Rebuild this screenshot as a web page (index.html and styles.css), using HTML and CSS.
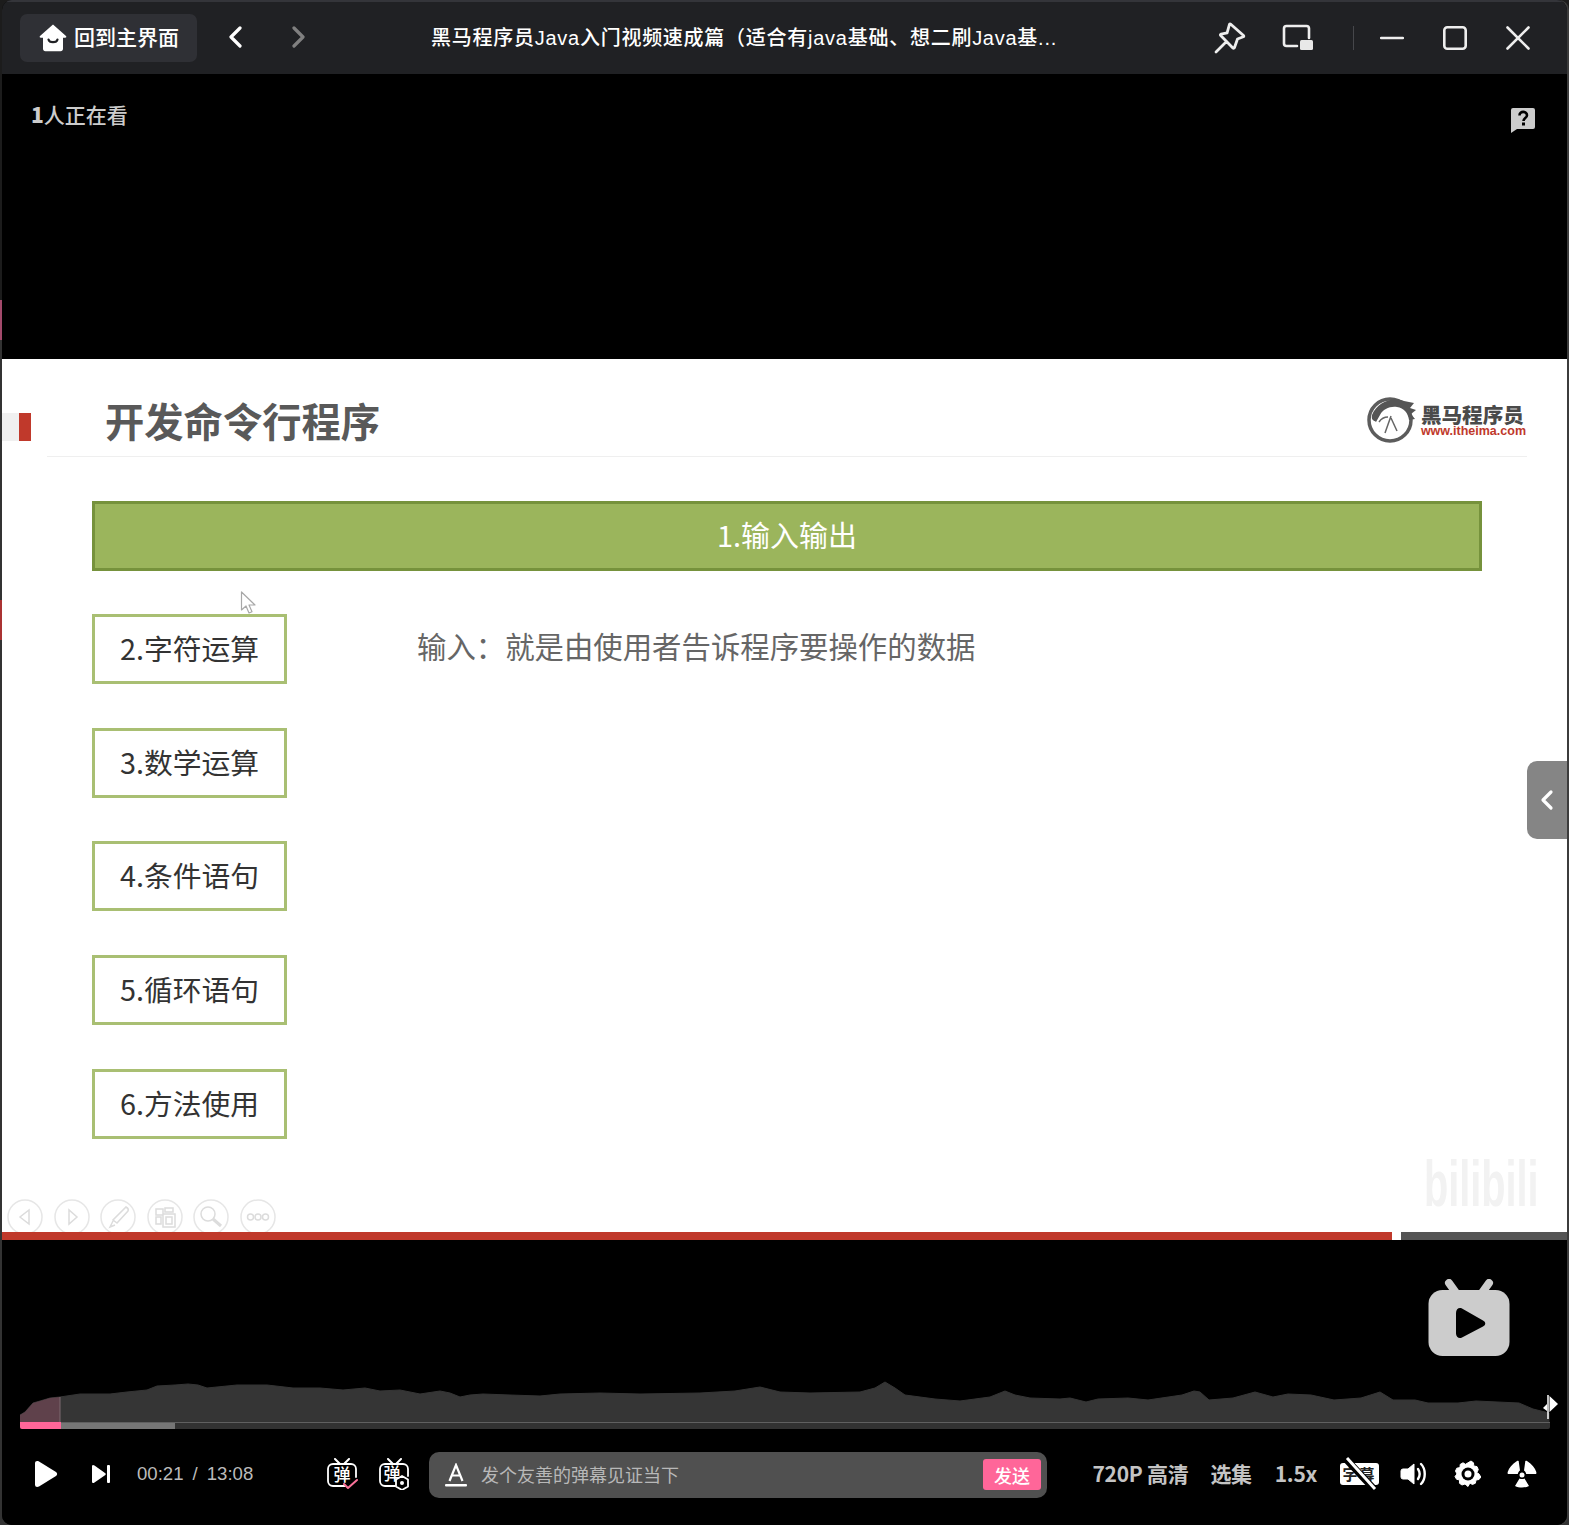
FILE: index.html
```html
<!DOCTYPE html>
<html lang="zh-CN">
<head>
<meta charset="utf-8">
<title>黑马程序员Java入门视频速成篇</title>
<link rel="stylesheet" href="styles.css">
</head>
<body>
<div class="window">
  <header class="titlebar">
    <button class="home-btn">
      <svg class="home-icon" viewBox="0 0 28 28"><path d="M14 .5 27 12c.7.7.2 1.800-.8 1.800H24v11c0 1.500-1 2.400-2.400 2.400H6.400C5 27.200 4 26.300 4 24.800v-11H1.800C.8 13.800.3 12.700 1 12z" fill="#fff"/><path d="M9.500 15.500c.8 3.600 8.200 3.600 9 0" fill="none" stroke="#202124" stroke-width="2.200" stroke-linecap="round"/></svg>
      <span class="raise">回到主界面</span>
    </button>
    <svg class="nav-arrow nav-back" viewBox="0 0 14 22"><path d="M12 2 3 11l9 9" fill="none" stroke="#fff" stroke-width="3.200" stroke-linecap="round" stroke-linejoin="round"/></svg>
    <svg class="nav-arrow nav-forward" viewBox="0 0 14 22"><path d="m2 2 9 9-9 9" fill="none" stroke="#808080" stroke-width="3.200" stroke-linecap="round" stroke-linejoin="round"/></svg>
    <div class="win-title"><span class="raise">黑马程序员Java入门视频速成篇（适合有java基础、想二刷Java基...</span></div>
    <div class="win-tools">
      <svg class="win-icon pin" viewBox="0 0 32 32"><path d="M16.500 2 29.500 13.500c.5.500.4 1-.2 1.300l-5.800 2.200-3 8.500c-.3.800-1 1-1.600.4L6.700 13.600c-.6-.6-.4-1.200.4-1.500l6-1.300 2.300-8.200c.2-.7.600-1 1.100-.6zM11 21l-9 9" fill="none" stroke="#eee" stroke-width="2.800" stroke-linecap="round" stroke-linejoin="round"/></svg>
      <svg class="win-icon pip" viewBox="0 0 32 28"><path d="M15 22H4.500A2.500 2.500 0 0 1 2 19.500V4.500A2.500 2.500 0 0 1 4.500 2h20A2.500 2.500 0 0 1 27 4.500V14" fill="none" stroke="#eee" stroke-width="2.600" stroke-linecap="round"/><rect x="18" y="16" width="13" height="10" rx="1.500" fill="#e8e8e8"/></svg>
      <i class="win-sep"></i>
      <svg class="win-icon min" viewBox="0 0 24 24"><path d="M1 12h22" stroke="#eee" stroke-width="2.500" stroke-linecap="round"/></svg>
      <svg class="win-icon max" viewBox="0 0 24 24"><rect x="1.300" y="1.300" width="21.400" height="21.400" rx="3" fill="none" stroke="#eee" stroke-width="2.600"/></svg>
      <svg class="win-icon close" viewBox="0 0 24 24"><path d="m1.500 1.500 21 21m0-21-21 21" stroke="#eee" stroke-width="2.600" stroke-linecap="round"/></svg>
    </div>
  </header>

  <main class="player">
    <div class="viewers"><b class="viewers-count">1</b>人正在看</div>
    <svg class="help-icon" viewBox="0 0 26 26"><path d="M3 1h20a2 2 0 0 1 2 2v17a2 2 0 0 1-2 2H7l-6 4V3a2 2 0 0 1 2-2z" fill="#ccc"/><path d="M9.500 8.500c0-5 7.500-4.500 7.500-.3 0 3-3.500 2.800-3.500 5.800" fill="none" stroke="#000" stroke-width="2.600"/><rect x="12" y="15.500" width="3" height="3" fill="#000"/></svg>

    <div class="letterbox"></div>

    <section class="slide">
      <div class="slide-top">
        <i class="slide-marker"></i>
        <h1 class="slide-title">开发命令行程序</h1>
        <div class="logo">
          <svg class="logo-mark" viewBox="0 0 50 50"><circle cx="24" cy="25" r="21" fill="none" stroke="#5c5c5c" stroke-width="3.500"/><path d="M6 20C11 8 26 1 38 6l10 2-4 5 6 2-5 4 4 5-6 1c-1-7-5-12-12-13-7-1-14 2-17 8l-4 7c-2-2-5-1-4-7z" fill="#555"/><path d="M25 21 19 38M25 23l6 13M13 27c2-3 5-5 9-5" fill="none" stroke="#666" stroke-width="1.500"/></svg>
          <div class="logo-text">
            <span class="logo-cn">黑马程序员</span>
            <span class="logo-en">www.itheima.com</span>
          </div>
        </div>
      </div>
      <div class="slide-rule"></div>
      <div class="banner">1.输入输出</div>
      <div class="slide-body">
        <ul class="topics">
          <li>2.字符运算</li>
          <li>3.数学运算</li>
          <li>4.条件语句</li>
          <li>5.循环语句</li>
          <li>6.方法使用</li>
        </ul>
        <p class="definition">输入：就是由使用者告诉程序要操作的数据</p>
      </div>

      <svg class="mouse" viewBox="0 0 18 24"><path d="M1.500 1v18l4.500-4 3 7 3-1.300-3-6.700h6z" fill="#fff" stroke="#a8a8a8" stroke-width="1.200" stroke-linejoin="round"/></svg>

      <div class="ppt-tools">
        <svg class="ppt-tool" viewBox="0 0 36 36"><circle cx="18" cy="18" r="17" class="ppt-ring"/><path d="M22 11v14l-9-7z" class="ppt-line"/></svg>
        <svg class="ppt-tool" viewBox="0 0 36 36"><circle cx="18" cy="18" r="17" class="ppt-ring"/><path d="M15 11v14l8-7z" class="ppt-line"/></svg>
        <svg class="ppt-tool" viewBox="0 0 36 36"><circle cx="18" cy="18" r="17" class="ppt-ring"/><path d="M26 8c2 1 3 2 2 4L17 24l-4-3zM13 22l-3 6 5-2" class="ppt-line"/></svg>
        <svg class="ppt-tool" viewBox="0 0 36 36"><circle cx="18" cy="18" r="17" class="ppt-ring"/><path d="M9 10h7v6H9zM9 18h5v7H9zM18 9h8v4h-8zM16 15h12v13H16zM19 18h6v7h-6z" class="ppt-line"/></svg>
        <svg class="ppt-tool" viewBox="0 0 36 36"><circle cx="18" cy="18" r="17" class="ppt-ring"/><circle cx="15" cy="15" r="7" class="ppt-line"/><path d="m20 20 8 7" class="ppt-thick"/></svg>
        <svg class="ppt-tool" viewBox="0 0 36 36"><circle cx="18" cy="18" r="17" class="ppt-ring"/><circle cx="10.500" cy="18" r="3" class="ppt-line"/><circle cx="18" cy="18" r="3" class="ppt-line"/><circle cx="25.500" cy="18" r="3" class="ppt-line"/></svg>
      </div>

      <div class="watermark"><span>bilibili</span></div>

      <div class="slide-progress">
        <i class="slide-progress-done"></i>
        <i class="slide-progress-rest"></i>
      </div>
    </section>

    <button class="side-tab" aria-label="展开">
      <svg viewBox="0 0 14 22"><path d="M11 3 3 11l8 8" fill="none" stroke="#fff" stroke-width="3.200" stroke-linecap="round" stroke-linejoin="round"/></svg>
    </button>

    <section class="controls">
      <svg class="tv-logo" viewBox="0 0 82 78"><path d="M21 4 31 18M61 4 51 18" stroke="#ccc" stroke-width="8" stroke-linecap="round"/><rect x="0.500" y="11" width="81" height="66" rx="14" fill="#ccc"/><path d="M28 34c0-4 3-6 6-4.500l21 12c3 1.500 3 4.500 0 6l-21 11c-3 1.500-6-.5-6-4z" fill="#000"/></svg>

      <div class="timeline">
        <svg class="heatmap" viewBox="0 0 1530 41">
          <path d="M0 34 5 31 13 22 20 20 30 17 40 16 60 13 90 13 107 11 127 9 137 5 155 4 168 3 178 4 187 7 217 4 247 4 273 7 300 7 323 9 345 7 360 10 380 9 400 13 420 10 430 12 440 16 450 14 463 13 490 14 520 15 540 13 580 12 620 13 680 12 715 10 740 6 760 11 790 12 840 11 855 7 865 1 875 7 885 14 915 18 940 20 970 16 985 10 995 14 1010 17 1040 18 1050 17 1066 21 1078 18 1108 17 1128 19 1162 14 1174 10 1180 11 1189 19 1213 17 1235 11 1253 16 1268 13 1291 14 1314 19 1341 17 1360 11 1373 19 1395 19 1408 22 1438 22 1456 20 1499 22 1513 28 1529 32 1529 41 0 41z" fill="#353535" stroke="#353535" stroke-linejoin="round"/>
          <path d="M0 34 5 31 13 22 20 20 30 17 40 16V41H0z" fill="#5f414b"/>
          <path d="M40 16V41" stroke="#7d6a70" stroke-width="1"/>
        </svg>
        <svg class="flag" viewBox="0 0 20 30"><path d="M8 2v24" stroke="#fff" stroke-width="1.500"/><path d="M9.500 3 18 11l-8.500 8zM7 11l-4 4 4 3z" fill="#fff"/></svg>
        <div class="track">
          <i class="track-played"></i>
          <i class="track-buffer"></i>
        </div>
      </div>

      <div class="bar">
        <svg class="ctl-play" viewBox="0 0 24 28"><path d="M1 3.500C1 1 3 .5 5 1.500l17 10.500c1.500 1 1.500 3 0 4L5 26.500C3 27.500 1 27 1 24.500z" fill="#fff"/></svg>
        <svg class="ctl-next" viewBox="0 0 18 20"><path d="M0 2.500C0 1 1 .5 2.500 1.500L13 9c1 .7 1 1.500 0 2.200L2.500 18.500C1 19.500 0 19 0 17.500z" fill="#fff"/><rect x="15" y="1" width="3" height="18" rx="1" fill="#fff"/></svg>
        <div class="time"><span>00:21</span><span>/</span><span>13:08</span></div>
        <svg class="dm-icon dm-one" viewBox="0 0 32 32"><path d="M9 1l5 5M23 1l-5 5" stroke="#fff" stroke-width="2" stroke-linecap="round"/><path d="M19 28H7a5 5 0 0 1-5-5V11a5 5 0 0 1 5-5h18a5 5 0 0 1 5 5v8" fill="none" stroke="#fff" stroke-width="1.800" stroke-linecap="round"/><text x="16" y="23" class="dm-text">弹</text><path d="m18 26 4 4 9-8" fill="none" stroke="#fb7299" stroke-width="2" stroke-linecap="round" stroke-linejoin="round"/></svg>
        <svg class="dm-icon dm-two" viewBox="0 0 32 32"><path d="M10 1l5 5M23 1l-5 5" stroke="#fff" stroke-width="2" stroke-linecap="round"/><path d="M17 28H7a5 5 0 0 1-5-5V11a5 5 0 0 1 5-5h18a5 5 0 0 1 5 5v7" fill="none" stroke="#fff" stroke-width="1.800" stroke-linecap="round"/><text x="14" y="22" class="dm-text">弹</text><path d="m24 18 6 3.500v7L24 32l-6-3.500v-7z" fill="#000" stroke="#fff" stroke-width="1.800" stroke-linejoin="round"/><circle cx="24" cy="25" r="2" fill="#fff"/></svg>
        <div class="dm-input">
          <svg class="dm-a" viewBox="0 0 24 24"><path d="m5.500 18 6.500-16 6.500 16M8 12.500h8" fill="none" stroke="#fff" stroke-width="2.200"/><rect x="1" y="21" width="22" height="2.600" rx="1" fill="#fff"/></svg>
          <span class="dm-placeholder">发个友善的弹幕见证当下</span>
          <button class="dm-send">发送</button>
        </div>
        <div class="bar-right">
          <span class="ctl-text">720P 高清</span>
          <span class="ctl-text">选集</span>
          <span class="ctl-text">1.5x</span>
          <div class="sub-icon">
            <span>字幕</span>
            <svg class="sub-slash" viewBox="0 0 40 34"><path d="M5 1 33 31" stroke="#000" stroke-width="7"/><path d="M7 1l28 31" stroke="#fff" stroke-width="3"/></svg>
          </div>
          <svg class="vol-icon" viewBox="0 0 26 26"><path d="M14 3v20l-6-5H3a2 2 0 0 1-2-2v-6a2 2 0 0 1 2-2h5z" fill="#fff" stroke="#fff" stroke-linejoin="round"/><path d="M18 8c2 3 2 7 0 10M21 3c5 5 5 15 0 20" fill="none" stroke="#fff" stroke-width="2.400" stroke-linecap="round"/></svg>
          <svg class="gear-icon" viewBox="0 0 28 28"><path d="M14 2.800 17 1l2.500 1.800.3 3.200 3.200.6 1.300 3L22.800 12.500 25 14l1.800 3-1.800 2.500-3 .5-.6 3.200-3 1.300-2.500-1.500L14 26.500l-3-2.500-3 1-2.600-1.800L5.600 20l-3-.7L1 16.500 3 14 1.500 11l1.300-2.800 3.200-.6.200-3.200L9 2.800l2.500 1.500z" fill="#fff" stroke="#fff" stroke-linejoin="round"/><circle cx="14" cy="14" r="6.500" fill="#000"/><circle cx="14" cy="14" r="3.500" fill="#fff"/></svg>
          <svg class="share-icon" viewBox="0 0 30 28"><path d="M10 1C11 .5 12 1 11.800 2L13 10.500C12 11 11 12.500 10.800 14H1.500C.5 14 .5 13 .7 12 2 8 5 4 10 1zM20 1C25 4 28 8 29.300 12c.2 1 .2 2-.8 2H19.200C19 12.500 18 11 17 10.500L18.200 2C18 1 19 .5 20 1z" fill="#fff"/><circle cx="15" cy="15" r="2.500" fill="#fff"/><path d="M12.500 18.500C14 19.300 16 19.300 17.500 18.500L22 26C18 28 12 28 8 26z" fill="#fff"/></svg>
        </div>
      </div>
    </section>
  </main>
</div>
</body>
</html>
```

FILE: styles.css
```css
* { box-sizing: border-box; }

html, body {
  margin: 0;
  height: 100%;
}

body {
  background: linear-gradient(#1c1c1c 0 300px, #a34a6b 300px 340px, #333 340px 600px, #a33 600px 640px, #333 640px);
  font-family: "Noto Sans CJK SC", "Noto Sans", sans-serif;
  overflow: hidden;
}

.window {
  display: flex;
  flex-direction: column;
  height: 1525px;
  margin-left: 2px;
  width: 1565px;
  background: #000;
  border-radius: 10px;
  overflow: hidden;
  box-shadow: 2px 0 0 #3c3c3c;
}

.raise {
  display: block;
  position: relative;
  top: -2px;
}

/* title bar */
.titlebar {
  flex: none;
  display: flex;
  align-items: center;
  height: 74px;
  padding: 0 37px 0 18px;
  background: #202124;
  border-top: 2px solid #34353a;
}

.home-btn {
  display: flex;
  align-items: center;
  gap: 7px;
  width: 177px;
  height: 48px;
  padding: 0 0 0 19px;
  border: 0;
  border-radius: 7px;
  background: #2f3035;
  color: #fff;
  font: 500 21px "Noto Sans CJK SC", sans-serif;
}

.home-icon { width: 28px; height: 28px; }

.nav-arrow { width: 14px; height: 22px; margin-bottom: 2px; }
.nav-back { margin-left: 31px; }
.nav-forward { margin-left: 50px; }

.win-title {
  flex: none;
  width: 640px;
  margin-left: 125px;
  color: #fff;
  font-family: "Liberation Sans", "Noto Sans CJK SC", sans-serif;
  font-size: 20px;
  font-weight: 500;
  letter-spacing: 0.74px;
  white-space: nowrap;
}

.win-tools {
  display: flex;
  align-items: center;
  margin-left: auto;
}

.win-icon { flex: none; }
.pin { width: 32px; height: 32px; }
.pip { width: 32px; height: 28px; margin-left: 36px; }
.win-sep { width: 1px; height: 24px; background: #46474b; margin: 0 26px 0 39px; }
.min { width: 24px; height: 24px; }
.max { width: 24px; height: 24px; margin-left: 39px; }
.close { width: 24px; height: 24px; margin-left: 39px; }

/* player */
.player {
  position: relative;
  flex: 1;
  display: flex;
  flex-direction: column;
  min-height: 0;
  background: #000;
}

.letterbox { flex: none; height: 285px; }

.viewers {
  position: absolute;
  left: 29px;
  top: 24px;
  color: #ccc;
  font-size: 21px;
  font-weight: 500;
  line-height: 32px;
}

.viewers-count { font-weight: 800; }

.help-icon {
  position: absolute;
  right: 31px;
  top: 33px;
  width: 26px;
  height: 26px;
}

/* slide */
.slide {
  position: relative;
  flex: none;
  height: 881px;
  background: #fff;
  overflow: hidden;
}

.slide-top {
  display: flex;
  align-items: center;
  height: 97px;
  padding-right: 41px;
}

.slide-marker {
  flex: none;
  width: 29px;
  height: 28px;
  margin-top: 38px;
  background: linear-gradient(90deg, #f0f0f0 0 17px, #c0392b 17px);
}

.slide-title {
  margin: 24px 0 0 74px;
  color: #595959;
  font-size: 39.300px;
  font-weight: 700;
  line-height: 56px;
}

.logo {
  display: flex;
  align-items: center;
  gap: 5px;
  margin: 28px 0 0 auto;
}

.logo-mark { width: 50px; height: 50px; margin-bottom: 4px; }

.logo-text {
  display: flex;
  flex-direction: column;
}

.logo-cn {
  color: #4a4a4a;
  font-size: 20.600px;
  font-weight: 900;
  line-height: 19px;
}

.logo-en {
  color: #c0392b;
  font: 700 12.500px/14px "Liberation Sans", sans-serif;
}

.slide-rule {
  height: 1px;
  margin: 0 40px 0 45px;
  background: #efefef;
}

.banner {
  width: 1390px;
  height: 70px;
  margin: 44px 0 0 90px;
  border: 3px solid #76923c;
  background: #9bb55c;
  color: #fff;
  font-size: 29px;
  line-height: 60px;
  text-align: center;
}

.slide-body {
  display: flex;
  align-items: flex-start;
  margin: 43px 0 0 90px;
}

.topics {
  flex: none;
  display: flex;
  flex-direction: column;
  gap: 43.700px;
  width: 195px;
  margin: 0;
  padding: 0;
  list-style: none;
}

.topics li {
  height: 70px;
  border: 3px solid #a9bf73;
  color: #333;
  font-size: 28.800px;
  line-height: 62px;
  text-align: center;
}

.definition {
  margin: 9px 0 0 130px;
  color: #666;
  font-size: 29.400px;
  line-height: 44px;
}

.mouse {
  position: absolute;
  left: 238px;
  top: 232px;
  width: 18px;
  height: 24px;
}

.ppt-tools {
  position: absolute;
  left: 5px;
  top: 840px;
  display: flex;
  gap: 10.500px;
}

.ppt-tool { width: 36px; height: 36px; }
.ppt-ring { fill: none; stroke: #e6e6e6; stroke-width: 1.500; }
.ppt-line { fill: none; stroke: #dcdcdc; stroke-width: 1.500; }
.ppt-thick { fill: none; stroke: #dcdcdc; stroke-width: 3; }

.watermark {
  position: absolute;
  left: 1422px;
  top: 789px;
  width: 124px;
  color: #f2f2f2;
  font: 700 64px/72px "Liberation Sans", sans-serif;
}

.watermark span {
  display: block;
  transform: scaleX(0.62);
  transform-origin: left center;
  white-space: nowrap;
}

.slide-progress {
  position: absolute;
  left: 0;
  right: 0;
  bottom: 0;
  display: flex;
  justify-content: space-between;
  height: 8px;
}

.slide-progress-done { width: 1390px; background: #c0392b; }
.slide-progress-rest { width: 166px; background: #555; }

.side-tab {
  position: absolute;
  right: 0;
  top: 687px;
  display: flex;
  align-items: center;
  justify-content: center;
  width: 40px;
  height: 78px;
  padding: 0;
  border: 0;
  border-radius: 10px 0 0 10px;
  background: #858585;
}

.side-tab svg { width: 14px; height: 22px; }

/* controls */
.controls {
  position: relative;
  flex: 1;
  display: flex;
  flex-direction: column;
  justify-content: flex-end;
  min-height: 0;
}

.tv-logo {
  position: absolute;
  right: 57px;
  top: 39px;
  width: 82px;
  height: 78px;
}

.timeline {
  position: relative;
  height: 48px;
  margin: 0 17px 21px 18px;
}

.heatmap {
  display: block;
  width: 1530px;
  height: 41px;
}

.flag {
  position: absolute;
  left: 1520px;
  top: 12px;
  width: 20px;
  height: 30px;
}

.track {
  display: flex;
  height: 7px;
  width: 1530px;
  border-radius: 0 0 2px 2px;
  background: #323232;
  border-top: 1px solid #606060;
}

.track-played { width: 41px; height: 7px; margin-top: -1px; background: #ff6699; border-radius: 0 0 0 2px; }
.track-buffer { width: 114px; height: 6px; background: #767676; }

.bar {
  display: flex;
  align-items: center;
  height: 47px;
  margin-bottom: 28px;
  padding: 0 30px 0 32px;
}

.ctl-play { width: 24px; height: 28px; flex: none; }
.ctl-next { width: 18px; height: 20px; margin-left: 34px; flex: none; }

.time {
  display: flex;
  gap: 9px;
  width: 189px;
  margin-left: 27px;
  color: #bbb;
  font: 18.600px "Liberation Sans", sans-serif;
}

.dm-icon { width: 32px; height: 32px; flex: none; }
.dm-two { margin-left: 20px; }
.dm-text { fill: #fff; font-size: 17px; font-weight: 500; text-anchor: middle; }

.dm-input {
  flex: none;
  display: flex;
  align-items: center;
  width: 618px;
  height: 46px;
  margin: 2px 0 0 19px;
  padding: 0 6px 0 15px;
  border-radius: 10px;
  background: #505050;
}

.dm-a { width: 24px; height: 24px; flex: none; }

.dm-placeholder {
  margin-left: 13px;
  padding-bottom: 2px;
  color: #b8b8b8;
  font-size: 18px;
  white-space: nowrap;
}

.dm-send {
  width: 58px;
  height: 31px;
  margin-left: auto;
  padding: 0;
  border: 0;
  border-radius: 3px;
  background: #ff6699;
  color: #fff;
  font: 500 18px "Noto Sans CJK SC", sans-serif;
}

.bar-right {
  display: flex;
  align-items: center;
  margin-left: auto;
}

.ctl-text {
  position: relative;
  top: -1px;
  margin-right: 22px;
  color: #c4c4c4;
  font-size: 21px;
  font-weight: 700;
  white-space: nowrap;
  letter-spacing: -0.300px;
}

.ctl-text:nth-child(2),
.ctl-text:nth-child(3) { margin-right: 23px; }

.sub-icon {
  position: relative;
  width: 39px;
  height: 22px;
  border-radius: 3px;
  background: #fff;
  color: #222;
  font-size: 15px;
  font-weight: 700;
  line-height: 22px;
  text-align: center;
  letter-spacing: 2px;
}

.sub-slash {
  position: absolute;
  left: 0;
  top: -6px;
  width: 40px;
  height: 34px;
}

.vol-icon { width: 26px; height: 26px; margin-left: 21px; }
.gear-icon { width: 28px; height: 28px; margin-left: 28px; }
.share-icon { width: 30px; height: 28px; margin-left: 25px; }
```
